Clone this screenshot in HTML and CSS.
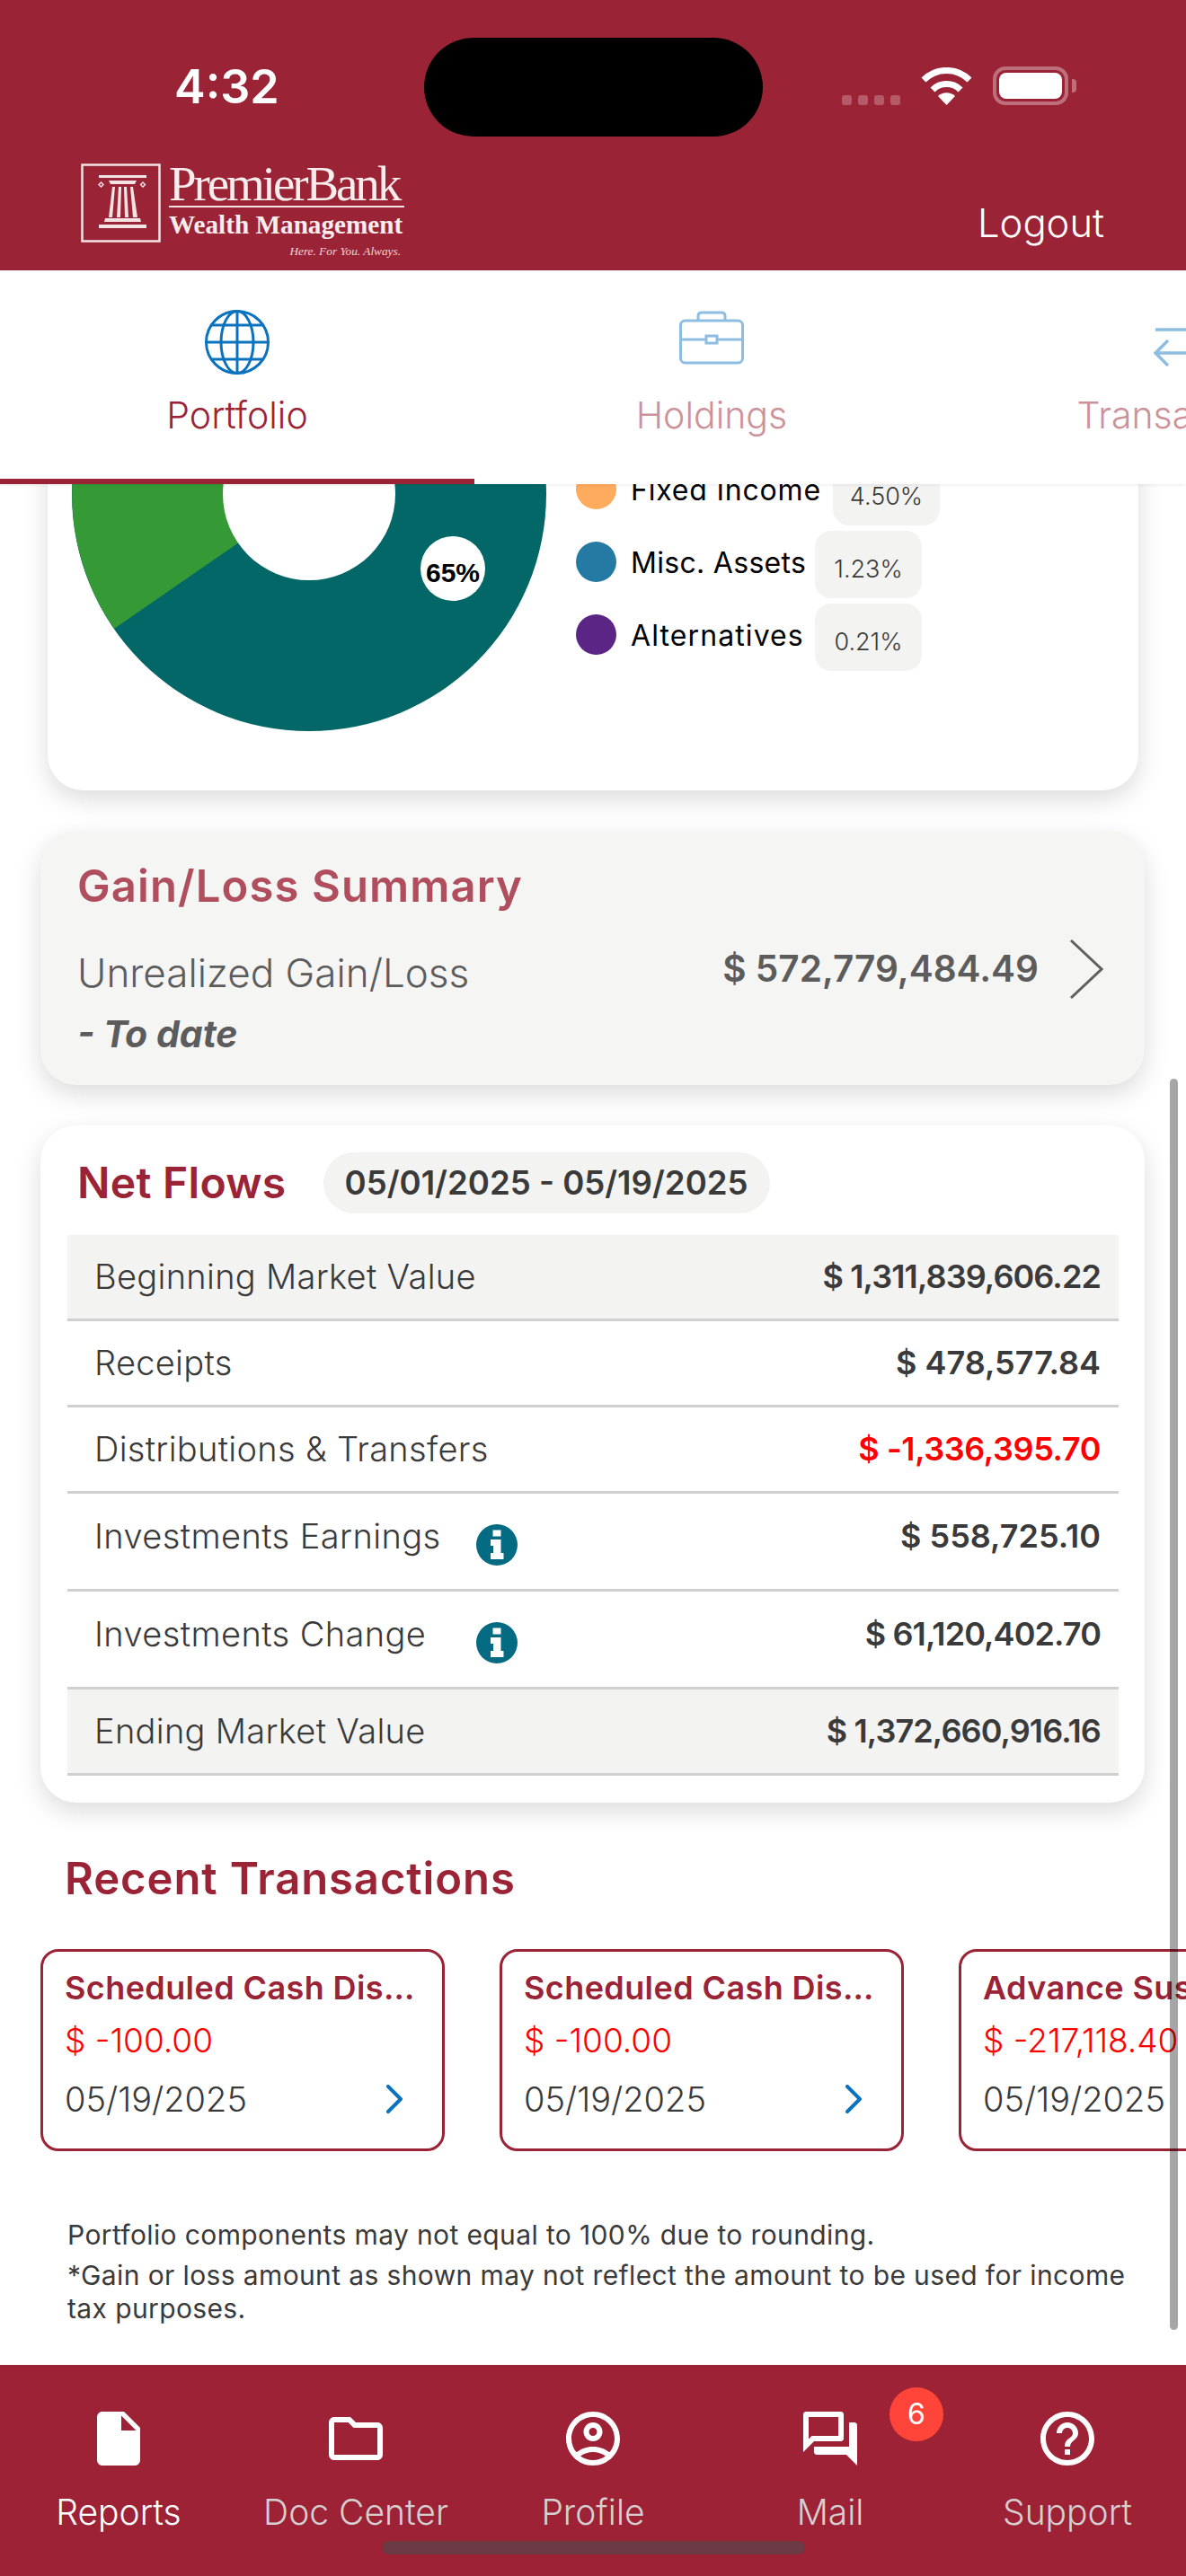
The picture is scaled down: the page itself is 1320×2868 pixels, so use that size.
FILE: index.html
```html
<!DOCTYPE html>
<html lang="en">
<head>
  <meta charset="UTF-8" />
  <meta name="viewport" content="width=device-width, initial-scale=1" />
  <title>PremierBank Wealth Management</title>
  <link rel="stylesheet" href="styles.css">
</head>
<body>
  <div class="app">
    <header class="top">
      <div class="status">
        <span class="time">4:32</span>
        <div class="island"></div>
        <div class="status-icons">
          <div class="cell"><i></i><i></i><i></i><i></i></div>
          <svg class="wifi" width="57" height="42" viewBox="0 0 57 42">
            <path d="M3 14A36 36 0 0 1 54 14" fill="none" stroke="#fff" stroke-width="7"/>
            <path d="M13 25A22 22 0 0 1 44 25" fill="none" stroke="#fff" stroke-width="7"/>
            <path d="M28.5 42L19 32A14 14 0 0 1 38 32Z" fill="#fff"/>
          </svg>
          <div class="battery"><div class="battery-fill"></div></div>
        </div>
      </div>
      <div class="brand-row">
        <div class="logo">
          <svg class="logo-box" width="89" height="88" viewBox="0 0 89 88">
            <rect x="1.5" y="1.5" width="86" height="85" fill="none" stroke="#f3e3e5" stroke-width="2.5"/>
            <g fill="#f3e3e5">
              <rect x="20" y="13" width="53" height="3"/>
              <path d="M31 19H62L60 23H33Z"/>
              <path d="M22.500 20L26 23.500L22.500 27L19 23.500ZM22.500 22L21 23.500L22.500 25L24 23.500Z" fill-rule="evenodd"/>
              <path d="M69 20L72.500 23.500L69 27L65.500 23.500ZM69 22L67.500 23.500L69 25L70.500 23.500Z" fill-rule="evenodd"/>
              <path d="M35 26H38L35 60H31Z"/>
              <path d="M42 26H45L44 60H40Z"/>
              <path d="M48 26H51L53 60H49Z"/>
              <path d="M55 26H58L63 60H58Z"/>
              <path d="M27 61H66L67 65H26Z"/>
              <rect x="20" y="68" width="53" height="4"/>
            </g>
          </svg>
          <div class="logo-text">
            <div class="logo-name">PremierBank</div>
            <div class="logo-sub">Wealth Management</div>
            <div class="logo-tag">Here. For You. Always.</div>
          </div>
        </div>
        <span class="logout">Logout</span>
      </div>
    </header>

    <nav class="tabs">
      <div class="tab active">
        <svg class="tab-icon" width="76" height="76" viewBox="0 0 76 76" fill="none" stroke="#0b72bd" stroke-width="3">
          <circle cx="38" cy="38" r="34.500"/>
          <ellipse cx="38" cy="38" rx="18" ry="34.500"/>
          <path d="M38 3.500V72.500M3.500 38H72.500M9 19H67M9 57H67"/>
        </svg>
        <span>Portfolio</span>
      </div>
      <div class="tab">
        <svg class="tab-icon" width="76" height="76" viewBox="0 0 76 76" fill="none" stroke="#8dbde0" stroke-width="3">
          <rect x="3.500" y="14" width="69" height="47" rx="5"/>
          <path d="M23 14V9Q23 5 27 5H49Q53 5 53 9V14M3.500 35H31M45 35H72.500"/>
          <rect x="32" y="31" width="12" height="8"/>
        </svg>
        <span>Holdings</span>
      </div>
      <div class="tab">
        <svg class="tab-icon" width="76" height="76" viewBox="0 0 76 76" fill="none" stroke="#8dbde0" stroke-width="3.500">
          <path d="M4 24H72M58 10L72 24L58 38M72 50H4M18 36L4 50L18 64"/>
        </svg>
        <span>Transactions</span>
      </div>
    </nav>

    <main class="content">
      <section class="card alloc">
        <svg class="pie" width="528" height="528" viewBox="-264 -264 528 528">
          <circle r="264" fill="#026766"/>
          <path d="M0 0L-217 150A264 264 0 0 1 0 -264Z" fill="#359a35"/>
          <circle r="96" fill="#fff"/>
          <circle cx="160" cy="83" r="36" fill="#fff"/>
          <text class="pie-label" x="160" y="98" text-anchor="middle">65%</text>
        </svg>
        <div class="legend">
          <div class="legend-row">
            <span class="dot dot-orange"></span>
            <span class="legend-name">Fixed Income</span>
            <span class="legend-pct">4.50%</span>
          </div>
          <div class="legend-row">
            <span class="dot dot-blue"></span>
            <span class="legend-name">Misc. Assets</span>
            <span class="legend-pct">1.23%</span>
          </div>
          <div class="legend-row">
            <span class="dot dot-purple"></span>
            <span class="legend-name">Alternatives</span>
            <span class="legend-pct">0.21%</span>
          </div>
        </div>
      </section>

      <section class="card gain">
        <h2 class="gain-title">Gain/Loss Summary</h2>
        <div class="gain-body">
          <div>
            <div class="gain-label">Unrealized Gain/Loss</div>
            <div class="gain-sub">- To date</div>
          </div>
          <div class="gain-value">$ 572,779,484.49</div>
          <svg class="gain-arrow" width="38" height="68" viewBox="0 0 38 68" fill="none" stroke="#5f5f5f" stroke-width="3">
            <path d="M2 2L36 34L2 66"/>
          </svg>
        </div>
      </section>

      <section class="card flows">
        <div class="flows-head">
          <h2 class="flows-title">Net Flows</h2>
          <span class="date-pill">05/01/2025 - 05/19/2025</span>
        </div>
        <div class="flow-row shaded">
          <span class="flow-name">Beginning Market Value</span>
          <span class="flow-value tight">$ 1,311,839,606.22</span>
        </div>
        <div class="flow-row">
          <span class="flow-name">Receipts</span>
          <span class="flow-value">$ 478,577.84</span>
        </div>
        <div class="flow-row">
          <span class="flow-name">Distributions &amp; Transfers</span>
          <span class="flow-value negative">$ -1,336,395.70</span>
        </div>
        <div class="flow-row tall">
          <span class="flow-name">Investments Earnings</span>
          <svg class="info" width="46" height="46" viewBox="0 0 46 46">
            <circle cx="23" cy="23" r="23" fill="#046b82"/>
            <path d="M18.500 6.500H27.500V13.500H18.500ZM16 17H27.500V32H30.500V39H16V32H19V24H16Z" fill="#fff"/>
          </svg>
          <span class="flow-value">$ 558,725.10</span>
        </div>
        <div class="flow-row tall">
          <span class="flow-name">Investments Change</span>
          <svg class="info" width="46" height="46" viewBox="0 0 46 46">
            <circle cx="23" cy="23" r="23" fill="#046b82"/>
            <path d="M18.500 6.500H27.500V13.500H18.500ZM16 17H27.500V32H30.500V39H16V32H19V24H16Z" fill="#fff"/>
          </svg>
          <span class="flow-value tight">$ 61,120,402.70</span>
        </div>
        <div class="flow-row shaded">
          <span class="flow-name">Ending Market Value</span>
          <span class="flow-value tight">$ 1,372,660,916.16</span>
        </div>
      </section>

      <h2 class="recent-title">Recent Transactions</h2>
      <div class="recent-list">
        <div class="txn">
          <div class="txn-name">Scheduled Cash Distribution</div>
          <div class="txn-amount">$ -100.00</div>
          <div class="txn-foot">
            <span class="txn-date">05/19/2025</span>
            <svg width="18" height="32" viewBox="0 0 18 32" fill="none" stroke="#0b72bd" stroke-width="4" stroke-linecap="round" stroke-linejoin="round"><path d="M2 2L16 16L2 30"/></svg>
          </div>
        </div>
        <div class="txn">
          <div class="txn-name">Scheduled Cash Distribution</div>
          <div class="txn-amount">$ -100.00</div>
          <div class="txn-foot">
            <span class="txn-date">05/19/2025</span>
            <svg width="18" height="32" viewBox="0 0 18 32" fill="none" stroke="#0b72bd" stroke-width="4" stroke-linecap="round" stroke-linejoin="round"><path d="M2 2L16 16L2 30"/></svg>
          </div>
        </div>
        <div class="txn">
          <div class="txn-name">Advance Suspense Account</div>
          <div class="txn-amount">$ -217,118.40</div>
          <div class="txn-foot">
            <span class="txn-date">05/19/2025</span>
            <svg width="18" height="32" viewBox="0 0 18 32" fill="none" stroke="#0b72bd" stroke-width="4" stroke-linecap="round" stroke-linejoin="round"><path d="M2 2L16 16L2 30"/></svg>
          </div>
        </div>
      </div>

      <div class="notes">
        <p>Portfolio components may not equal to 100% due to rounding.</p>
        <p>*Gain or loss amount as shown may not reflect the amount to be used for income tax purposes.</p>
      </div>

      <div class="scrollbar"></div>
    </main>

    <footer class="bottom">
      <div class="nav-item current">
        <svg width="72" height="72" viewBox="0 0 24 24" fill="#fff"><path d="M6 2c-1.100 0-2 .9-2 2v16c0 1.100.9 2 2 2h12c1.100 0 2-.9 2-2V8l-6-6H6zm7 7V3.500L18.500 9H13z"/></svg>
        <span>Reports</span>
      </div>
      <div class="nav-item">
        <svg width="72" height="72" viewBox="0 0 24 24" fill="#fff"><path d="M9.170 6l2 2H20v10H4V6h5.170M10 4H4c-1.100 0-1.990.9-1.990 2L2 18c0 1.100.9 2 2 2h16c1.100 0 2-.9 2-2V8c0-1.100-.9-2-2-2h-8l-2-2z"/></svg>
        <span>Doc Center</span>
      </div>
      <div class="nav-item">
        <svg width="72" height="72" viewBox="0 0 24 24" fill="#fff"><path d="M12 2C6.480 2 2 6.480 2 12s4.480 10 10 10 10-4.480 10-10S17.520 2 12 2zM7.350 18.500C8.660 17.560 10.260 17 12 17s3.340.56 4.650 1.500c-1.310.94-2.910 1.500-4.650 1.500s-3.340-.56-4.650-1.500zm10.790-1.380C16.450 15.800 14.320 15 12 15s-4.450.8-6.140 2.120C4.700 15.730 4 13.950 4 12c0-4.420 3.580-8 8-8s8 3.580 8 8c0 1.950-.7 3.730-1.860 5.120z"/><path d="M12 6c-1.930 0-3.500 1.570-3.500 3.500S10.070 13 12 13s3.500-1.570 3.500-3.500S13.930 6 12 6zm0 5c-.83 0-1.500-.67-1.500-1.500S11.170 8 12 8s1.500.67 1.500 1.500S12.830 11 12 11z"/></svg>
        <span>Profile</span>
      </div>
      <div class="nav-item">
        <svg width="72" height="72" viewBox="0 0 24 24" fill="#fff"><path d="M15 4v7H5.170L4 12.170V4h11m1-2H3c-.55 0-1 .45-1 1v14l4-4h10c.55 0 1-.45 1-1V3c0-.55-.45-1-1-1zm5 4h-2v9H6v2c0 .55.45 1 1 1h11l4 4V7c0-.55-.45-1-1-1z"/></svg>
        <span>Mail</span>
        <b class="nav-badge">6</b>
      </div>
      <div class="nav-item">
        <svg width="72" height="72" viewBox="0 0 24 24" fill="#fff"><path d="M11 18h2v-2h-2v2zm1-16C6.480 2 2 6.480 2 12s4.480 10 10 10 10-4.480 10-10S17.520 2 12 2zm0 18c-4.410 0-8-3.590-8-8s3.590-8 8-8 8 3.590 8 8-3.590 8-8 8zm0-14c-2.210 0-4 1.790-4 4h2c0-1.100.9-2 2-2s2 .9 2 2c0 2-3 1.750-3 5h2c0-2.250 3-2.500 3-5 0-2.210-1.790-4-4-4z"/></svg>
        <span>Support</span>
      </div>
      <div class="home-bar"></div>
    </footer>
  </div>
</body>
</html>
```

FILE: styles.css
```css
* {
  box-sizing: border-box;
}
body {
  margin: 0;
  font-family: Inter, "Noto Sans", sans-serif;
  background: #fff;
  color: #3a3a3a;
}
h2,
p {
  margin: 0;
}
.app {
  width: 1320px;
  height: 2868px;
  display: flex;
  flex-direction: column;
  overflow: hidden;
}

/* header */
.top {
  background: #9b2336;
  color: #fff;
  height: 301px;
  flex: none;
}
.status {
  display: flex;
  height: 152px;
  padding: 42px 0 0 194px;
}
.time {
  width: 278px;
  align-self: flex-end;
  margin-bottom: 28px;
  font-size: 52px;
  line-height: 54px;
  font-weight: 600;
}
.island {
  width: 377px;
  height: 110px;
  background: #000;
  border-radius: 55px;
  margin-right: 88px;
}
.status-icons {
  display: flex;
  align-items: flex-end;
  gap: 23px;
  height: 75px;
}
.cell {
  display: flex;
  gap: 7px;
}
.cell i {
  width: 11px;
  height: 11px;
  border-radius: 3px;
  background: rgba(255, 255, 255, 0.25);
}
.battery {
  position: relative;
  width: 84px;
  height: 43px;
  padding: 3px;
  border: 4px solid rgba(255, 255, 255, 0.35);
  border-radius: 14px;
  margin-right: 9px;
}
.battery::after {
  content: "";
  position: absolute;
  right: -13px;
  top: 10px;
  width: 5px;
  height: 15px;
  background: rgba(255, 255, 255, 0.35);
  border-radius: 0 4px 4px 0;
}
.battery-fill {
  height: 100%;
  background: #fff;
  border-radius: 8px;
}
.brand-row {
  display: flex;
  justify-content: space-between;
  padding: 30px 91px 0 90px;
}
.logo {
  display: flex;
  gap: 9px;
}
.logo-box {
  flex: none;
}
.logo-text {
  width: 262px;
  font-family: "Liberation Serif", serif;
  color: #f8eced;
}
.logo-name {
  font-size: 55px;
  line-height: 46px;
  letter-spacing: -3.1px;
  height: 49px;
  border-bottom: 2px solid #f3e3e5;
}
.logo-sub {
  font-size: 29.200px;
  line-height: 33px;
  margin-top: 3px;
  font-weight: 700;
  white-space: nowrap;
}
.logo-tag {
  font-size: 13.300px;
  line-height: 17px;
  margin-top: 4px;
  font-style: italic;
  text-align: right;
  padding-right: 4px;
  color: #eed5d9;
}
.logout {
  font-size: 43.500px;
  line-height: 50px;
  font-weight: 300;
  margin-top: 41px;
}

/* tabs */
.tabs {
  display: flex;
  flex: none;
  height: 238px;
  background: #fff;
  position: relative;
  z-index: 2;
  box-shadow: 0 1px 4px rgba(0, 0, 0, 0.08);
}
.tab {
  flex: none;
  width: 528px;
  height: 238px;
  display: flex;
  flex-direction: column;
  align-items: center;
  padding-top: 42px;
  font-size: 41px;
  line-height: 48px;
  font-weight: 300;
  color: #cd919a;
}
.tab.active {
  color: #9b2336;
  border-bottom: 6px solid #9b2336;
}
.tab-icon {
  margin-bottom: 19px;
}

/* scrolled content */
.content {
  position: relative;
  flex: 1;
  min-height: 0;
  overflow: hidden;
}
.card {
  border-radius: 40px;
  box-shadow: 0 10px 28px rgba(0, 0, 0, 0.14);
}
.alloc {
  display: flex;
  margin: -300px 53px 0;
  height: 641px;
  padding: 47px 0 0 27px;
  background: #fff;
}
.pie {
  flex: none;
}
.pie-label {
  font-family: "Liberation Sans", sans-serif;
  font-size: 30px;
  font-weight: 700;
  fill: #000;
}
.legend {
  margin: 219px 0 0 33px;
}
.legend-row {
  display: flex;
  align-items: center;
  height: 81px;
}
.dot {
  flex: none;
  width: 45px;
  height: 45px;
  border-radius: 50%;
  margin-right: 16px;
  margin-top: -3px;
}
.dot-orange {
  background: #ffab5e;
}
.dot-blue {
  background: #247aa3;
}
.dot-purple {
  background: #5b2585;
}
.legend-name {
  font-size: 32px;
  letter-spacing: 0.3px;
  color: #000;
  font-weight: 400;
  width: 205px;
  white-space: nowrap;
}
.legend-row:first-child .legend-name {
  width: 225px;
  letter-spacing: 0.8px;
}
.legend-row:last-child .legend-name {
  letter-spacing: 1.1px;
}
.legend-pct {
  width: 119px;
  height: 75px;
  padding-top: 25px;
  text-align: center;
  background: #f3f3f2;
  border-radius: 18px;
  font-size: 27px;
  line-height: 36px;
  font-weight: 300;
  margin-top: 3px;
}
.gain {
  margin: 45px 46px 0 45px;
  height: 283px;
  padding: 34px 46px 0 41px;
  background: #f5f5f4;
  color: #5c5c5c;
}
.gain-title {
  font-size: 49px;
  line-height: 56px;
  letter-spacing: 1.1px;
  font-weight: 600;
  color: #b04e5e;
}
.gain-body {
  display: flex;
  margin-top: 34px;
}
.gain-label {
  font-size: 44px;
  line-height: 68px;
  font-weight: 300;
}
.gain-sub {
  font-size: 41px;
  line-height: 68px;
  font-weight: 700;
  font-style: italic;
}
.gain-value {
  margin-left: auto;
  font-size: 40.500px;
  line-height: 60px;
  font-weight: 600;
}
.gain-arrow {
  margin-left: 34px;
  margin-top: -4px;
}
.flows {
  margin: 45px 46px 0 45px;
  height: 754px;
  padding: 30px 29px 0 30px;
  background: #fff;
}
.flows-head {
  display: flex;
  align-items: center;
  gap: 41px;
  padding-left: 11px;
  margin-bottom: 24px;
}
.flows-title {
  font-size: 48px;
  line-height: 68px;
  letter-spacing: 0.3px;
  font-weight: 600;
  color: #9b2336;
}
.date-pill {
  height: 68px;
  padding: 0 24px;
  background: #f3f3f2;
  border-radius: 34px;
  font-size: 36.600px;
  line-height: 68px;
  font-weight: 600;
}
.flow-row {
  display: flex;
  align-items: center;
  height: 96px;
  padding: 1px 20px 2px 30px;
  border-bottom: 3px solid #d0d0d0;
  font-size: 38px;
}
.flow-row.shaded {
  background: #f3f3f2;
}
.flow-row.tall {
  height: 109px;
  align-items: flex-start;
  padding-top: 24px;
}
.flow-name {
  font-weight: 300;
  line-height: 46px;
  letter-spacing: 0.3px;
}
.tall .flow-name {
  width: 425px;
  letter-spacing: 0.4px;
}
.info {
  margin-top: 10px;
}
.flow-value {
  margin-left: auto;
  font-size: 36px;
  font-weight: 600;
  line-height: 46px;
  letter-spacing: 0;
}
.flow-value.tight {
  letter-spacing: -0.9px;
}
.flow-value.negative {
  color: #f00;
  letter-spacing: -0.4px;
}
.recent-title {
  margin: 55px 0 0 72px;
  font-size: 49px;
  line-height: 60px;
  letter-spacing: 0.9px;
  font-weight: 600;
  color: #9b2336;
}
.recent-list {
  display: flex;
  gap: 61px;
  margin-top: 48px;
  padding-left: 45px;
}
.txn {
  flex: none;
  width: 450px;
  height: 225px;
  padding: 18px 23px 0 24px;
  border: 3px solid #9b2336;
  border-radius: 20px;
}
.txn-name {
  font-size: 36px;
  line-height: 44px;
  letter-spacing: 0.4px;
  font-weight: 600;
  color: #9b2336;
  white-space: nowrap;
  overflow: hidden;
  text-overflow: ellipsis;
}
.txn-amount {
  font-size: 37px;
  line-height: 44px;
  margin-top: 15px;
  color: #f00;
  font-weight: 300;
}
.txn-foot {
  display: flex;
  justify-content: space-between;
  align-items: center;
  margin: 21px 21px 0 0;
  font-size: 38px;
  line-height: 44px;
  font-weight: 300;
}
.notes {
  margin: 75px 0 0 75px;
  width: 1200px;
  font-size: 30px;
  line-height: 37px;
  letter-spacing: 0.38px;
  font-weight: 400;
}
.notes p {
  margin-bottom: 8px;
}
.scrollbar {
  position: absolute;
  right: 9px;
  top: 662px;
  width: 9px;
  height: 1393px;
  border-radius: 5px;
  background: rgba(0, 0, 0, 0.35);
}

/* bottom nav */
.bottom {
  position: relative;
  display: flex;
  flex: none;
  height: 235px;
  background: #9d2236;
}
.nav-item {
  position: relative;
  flex: none;
  width: 264px;
  display: flex;
  flex-direction: column;
  align-items: center;
  padding-top: 46px;
  font-size: 39px;
  line-height: 48px;
  font-weight: 300;
  color: #d6cfd0;
}
.nav-item.current {
  color: #fff;
}
.nav-item svg {
  margin-bottom: 22px;
}
.nav-badge {
  position: absolute;
  left: 198px;
  top: 25px;
  width: 60px;
  height: 60px;
  border-radius: 50%;
  background: #ff453a;
  color: #fff;
  font-size: 32px;
  line-height: 60px;
  font-weight: 400;
  text-align: center;
}
.home-bar {
  position: absolute;
  left: 425px;
  top: 196px;
  width: 471px;
  height: 15px;
  border-radius: 8px;
  background: #6b3a45;
}
```
